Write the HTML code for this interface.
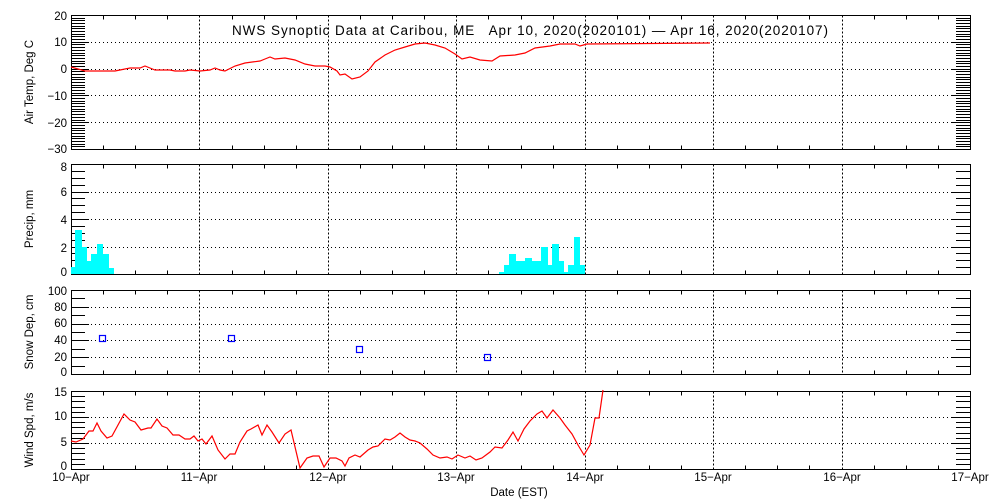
<!DOCTYPE html>
<html><head><meta charset="utf-8"><style>
html,body{margin:0;padding:0;background:#fff;}
svg{display:block;font-family:"Liberation Sans",sans-serif;}
text{font-size:11.5px;fill:#000;}
</style></head><body>
<svg id="s" width="1000" height="500" xmlns="http://www.w3.org/2000/svg">
<g id="g"></g>
<text x="232" y="35" style="font-size:13.5px;white-space:pre" xml:space="preserve" textLength="596" lengthAdjust="spacing">NWS Synoptic Data at Caribou, ME   Apr 10, 2020(2020101) — Apr 16, 2020(2020107)</text>
<g text-anchor="end">
<text x="67" y="20">20</text><text x="67" y="46">10</text><text x="67" y="73">0</text><text x="67" y="100">−10</text><text x="67" y="127">−20</text><text x="67" y="153">−30</text>
<text x="67" y="171">8</text><text x="67" y="196">6</text><text x="67" y="224">4</text><text x="67" y="252">2</text><text x="67" y="276">0</text>
<text x="67" y="295">100</text><text x="67" y="311">80</text><text x="67" y="327">60</text><text x="67" y="344">40</text><text x="67" y="361">20</text><text x="67" y="376">0</text>
<text x="67" y="396">15</text><text x="67" y="420">10</text><text x="67" y="446">5</text><text x="67" y="470">0</text>
</g>
<g text-anchor="middle">
<text transform="translate(33,82) rotate(-90)">Air Temp, Deg C</text>
<text transform="translate(33,219) rotate(-90)">Precip, mm</text>
<text transform="translate(33,332) rotate(-90)">Snow Dep, cm</text>
<text transform="translate(33,430) rotate(-90)">Wind Spd, m/s</text>
<text x="71" y="481">10−Apr</text><text x="199" y="481">11−Apr</text><text x="328" y="481">12−Apr</text><text x="456" y="481">13−Apr</text><text x="585" y="481">14−Apr</text><text x="713" y="481">15−Apr</text><text x="842" y="481">16−Apr</text><text x="970" y="481">17−Apr</text>
<text x="519" y="496">Date (EST)</text>
</g>
</svg>
<script>
var g=document.getElementById('g'),h='';
function L(x1,y1,x2,y2,st){h+='<line x1="'+x1+'" y1="'+y1+'" x2="'+x2+'" y2="'+y2+'" stroke="#000" stroke-width="1" '+(st||'')+'/>';}
var X0=71,X1=970,D=(X1-X0)/7;
var P=[[15,149,20,-30,1,10],[164,274,8,0,0.5,2],[290,374,100,0,10,20],[391,469,15,0,1,5]];
P.forEach(function(p){var t=p[0]+.5,b=p[1]+.5,vmax=p[2],vmin=p[3];
 h+='<rect x="'+(X0+.5)+'" y="'+t+'" width="'+(X1-X0)+'" height="'+(b-t)+'" fill="none" stroke="#000" stroke-width="1"/>';
 function Y(v){return p[0]+(vmax-v)/(vmax-vmin)*(p[1]-p[0]);}
 for(var v=vmin;v<=vmax+1e-6;v+=p[4]){var y=Math.round(Y(v))+.5;L(X0,y,X0+14,y);L(X1-14,y,X1,y);}
 for(var v=vmin+p[5];v<vmax-1e-6;v+=p[5]){var y=Math.round(Y(v))+.5;L(X0,y,X0+18,y);L(X1-18,y,X1,y);L(X0,y,X1,y,'stroke-dasharray="1,3"');}
 for(var i=1;i<28;i++){var x=Math.round(X0+i*D/4)+.5;if(i%4==0)L(x,t,x,b,'stroke-dasharray="2,2"');else{L(x,t,x,t+4);L(x,b-4,x,b);}}
});
function pl(pts,c){h+='<polyline fill="none" stroke="'+c+'" stroke-width="1.2" points="'+pts+'"/>';}
pl("71,67 78,69 85,71 100,71 115,71 120,70 130,68 140,68 145,66 150,68 155,70 170,70 175,71 185,71 190,70 200,71 210,70 215,68 220,70 225,71 235,66 245,63 260,61 265,59 270,57 275,59 285,58 295,60 305,64 315,66 325,66 330,67 337,71 340,75 345,74 352,79 360,77 368,71 375,62 385,55 395,50 405,47 415,44 425,43 435,45 445,48 455,54 462,59 470,57 480,60 492,61 500,56 515,55 525,53 535,48 550,46 560,44 575,44 580,46 587,44 710,43","#f00");
pl("71,441 76,442 83,439 89,431 93,431 97,423 101,431 107,438 112,436 124,414 130,420 135,422 141,430 148,428 151,428 157,419 162,426 167,428 173,435 179,435 185,439 190,439 194,436 198,441 202,439 206,444 212,436 218,450 225,459 230,454 235,454 240,442 247,431 251,429 258,425 262,435 267,425 272,432 279,443 285,434 291,430 300,468 307,458 313,456 319,456 324,467 330,458 336,458 342,461 345,466 349,458 355,455 360,457 368,450 373,447 378,446 385,439 390,440 395,437 400,433 405,437 410,440 415,441 420,443 427,449 433,455 440,458 447,457 452,459 458,455 465,458 470,456 476,460 482,458 490,452 495,447 502,448 508,440 513,432 518,441 524,429 530,421 537,414 542,411 547,418 553,410 560,418 565,425 572,434 578,445 584,455 590,445 595,418 599,418 603,390","#f00");
var bars=[[71,75,267],[75,82,230],[82,87,247],[87,91,261],[91,97,254],[97,103,244],[103,109,254],[109,114,268],
[499,504,272],[504,509,265],[509,516,254],[516,525,261],[525,532,258],[532,541,261],[541,548,247],[548,552,265],[552,559,244],[559,564,261],[564,568,272],[568,574,265],[574,580,237],[580,585,265]];
bars.forEach(function(b){h+='<rect x="'+b[0]+'" y="'+b[2]+'" width="'+(b[1]-b[0])+'" height="'+(274-b[2])+'" fill="#0ff"/>';});
[[102,338],[231,338],[359,349],[487,357]].forEach(function(p){h+='<rect x="'+(p[0]-3+.5)+'" y="'+(p[1]-3+.5)+'" width="6" height="6" fill="none" stroke="#00f" stroke-width="1.2"/>';});
g.innerHTML=h;
</script>
</body></html>
